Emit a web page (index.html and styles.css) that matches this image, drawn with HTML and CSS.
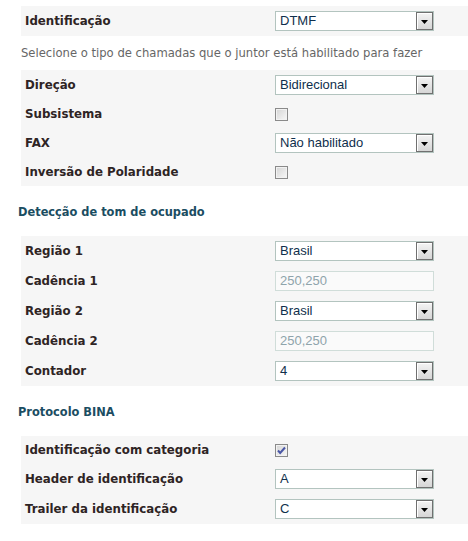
FILE: index.html
```html
<!DOCTYPE html>
<html lang="pt">
<head>
<meta charset="utf-8">
<title>Juntor</title>
<link rel="stylesheet" href="styles.css">
</head>
<body>
<div class="page">
  <div class="box">
    <div class="row">
      <div class="label">Identificação</div>
      <div class="select"><span class="value">DTMF</span><span class="arrow"><svg width="7" height="4" viewBox="0 0 7 4"><path d="M0 0H7L3.5 4Z" fill="#000"/></svg></span></div>
    </div>
  </div>

  <p class="desc">Selecione o tipo de chamadas que o juntor está habilitado para fazer</p>

  <div class="box">
    <div class="row">
      <div class="label">Direção</div>
      <div class="select"><span class="value">Bidirecional</span><span class="arrow"><svg width="7" height="4" viewBox="0 0 7 4"><path d="M0 0H7L3.5 4Z" fill="#000"/></svg></span></div>
    </div>
    <div class="row row-check">
      <div class="label">Subsistema</div>
      <div class="check"></div>
    </div>
    <div class="row">
      <div class="label">FAX</div>
      <div class="select"><span class="value">Não habilitado</span><span class="arrow"><svg width="7" height="4" viewBox="0 0 7 4"><path d="M0 0H7L3.5 4Z" fill="#000"/></svg></span></div>
    </div>
    <div class="row row-check">
      <div class="label">Inversão de Polaridade</div>
      <div class="check"></div>
    </div>
  </div>

  <h3 class="section">Detecção de tom de ocupado</h3>

  <div class="box">
    <div class="row">
      <div class="label">Região 1</div>
      <div class="select"><span class="value">Brasil</span><span class="arrow"><svg width="7" height="4" viewBox="0 0 7 4"><path d="M0 0H7L3.5 4Z" fill="#000"/></svg></span></div>
    </div>
    <div class="row">
      <div class="label">Cadência 1</div>
      <div class="input disabled">250,250</div>
    </div>
    <div class="row">
      <div class="label">Região 2</div>
      <div class="select"><span class="value">Brasil</span><span class="arrow"><svg width="7" height="4" viewBox="0 0 7 4"><path d="M0 0H7L3.5 4Z" fill="#000"/></svg></span></div>
    </div>
    <div class="row">
      <div class="label">Cadência 2</div>
      <div class="input disabled">250,250</div>
    </div>
    <div class="row">
      <div class="label">Contador</div>
      <div class="select"><span class="value">4</span><span class="arrow"><svg width="7" height="4" viewBox="0 0 7 4"><path d="M0 0H7L3.5 4Z" fill="#000"/></svg></span></div>
    </div>
  </div>

  <h3 class="section">Protocolo BINA</h3>

  <div class="box">
    <div class="row row-check">
      <div class="label">Identificação com categoria</div>
      <div class="check checked"><svg width="11" height="11" viewBox="0 0 11 11"><path d="M2 5.5L4.2 8L9 2.5" fill="none" stroke="#4a57a6" stroke-width="2"/></svg></div>
    </div>
    <div class="row">
      <div class="label">Header de identificação</div>
      <div class="select"><span class="value">A</span><span class="arrow"><svg width="7" height="4" viewBox="0 0 7 4"><path d="M0 0H7L3.5 4Z" fill="#000"/></svg></span></div>
    </div>
    <div class="row">
      <div class="label">Trailer da identificação</div>
      <div class="select"><span class="value">C</span><span class="arrow"><svg width="7" height="4" viewBox="0 0 7 4"><path d="M0 0H7L3.5 4Z" fill="#000"/></svg></span></div>
    </div>
  </div>
</div>
</body>
</html>
```

FILE: styles.css
```css
html, body {
  margin: 0;
  padding: 0;
  background: #ffffff;
}

body {
  font-family: "DejaVu Sans", Verdana, sans-serif;
  font-size: 11px;
}

.page {
  padding: 6px 0 0 18px;
}

.box {
  margin-left: 3px;
  background: #f6f6f6;
}

.row {
  display: grid;
  grid-template-columns: 254px 159px;
  align-items: center;
  height: 30px;
}

.row-check {
  height: 28px;
}

.label {
  padding-left: 4px;
  font-size: 11.8px;
  font-weight: bold;
  color: #2e2424;
  line-height: 14px;
  margin-top: -1px;
}

.select {
  display: flex;
  align-items: center;
  box-sizing: border-box;
  height: 20px;
  border: 1px solid #b3c4bf;
  background: #ffffff;
  font-family: "Liberation Sans", Arial, sans-serif;
  font-size: 13px;
  color: #0f2f4c;
}

.select .value {
  flex: 1;
  padding-left: 4px;
  line-height: 18px;
}

.select .arrow {
  box-sizing: border-box;
  width: 17px;
  height: 18px;
  display: flex;
  align-items: center;
  justify-content: center;
  border: 1px solid #707070;
  box-shadow: inset 1px 1px 0 #ffffff;
  background: linear-gradient(#f4f4f4, #d6d6d6);
}

.select .arrow svg {
  display: block;
  margin-top: 1px;
}

.input {
  box-sizing: border-box;
  height: 20px;
  border: 1px solid #d0ddd9;
  padding-left: 4px;
  line-height: 18px;
  font-family: "Liberation Sans", Arial, sans-serif;
  font-size: 13px;
}

.input.disabled {
  background: #fafafa;
  color: #8fa4ab;
}

.check {
  box-sizing: border-box;
  width: 13px;
  height: 13px;
  border: 1px solid #8a8a8a;
  box-shadow: inset 0 0 0 1px #f2f2f2;
  background: linear-gradient(135deg, #d4d4d4, #f8f8f8);
  display: flex;
  align-items: center;
  justify-content: center;
}

.check svg {
  display: block;
}

.desc {
  margin: 10px 0 10px 3px;
  font-size: 11.6px;
  line-height: 14px;
  color: #666666;
}

.section {
  margin: 19px 0 17px 0;
  font-size: 11.4px;
  line-height: 14px;
  font-weight: bold;
  color: #1b4d62;
}
```
